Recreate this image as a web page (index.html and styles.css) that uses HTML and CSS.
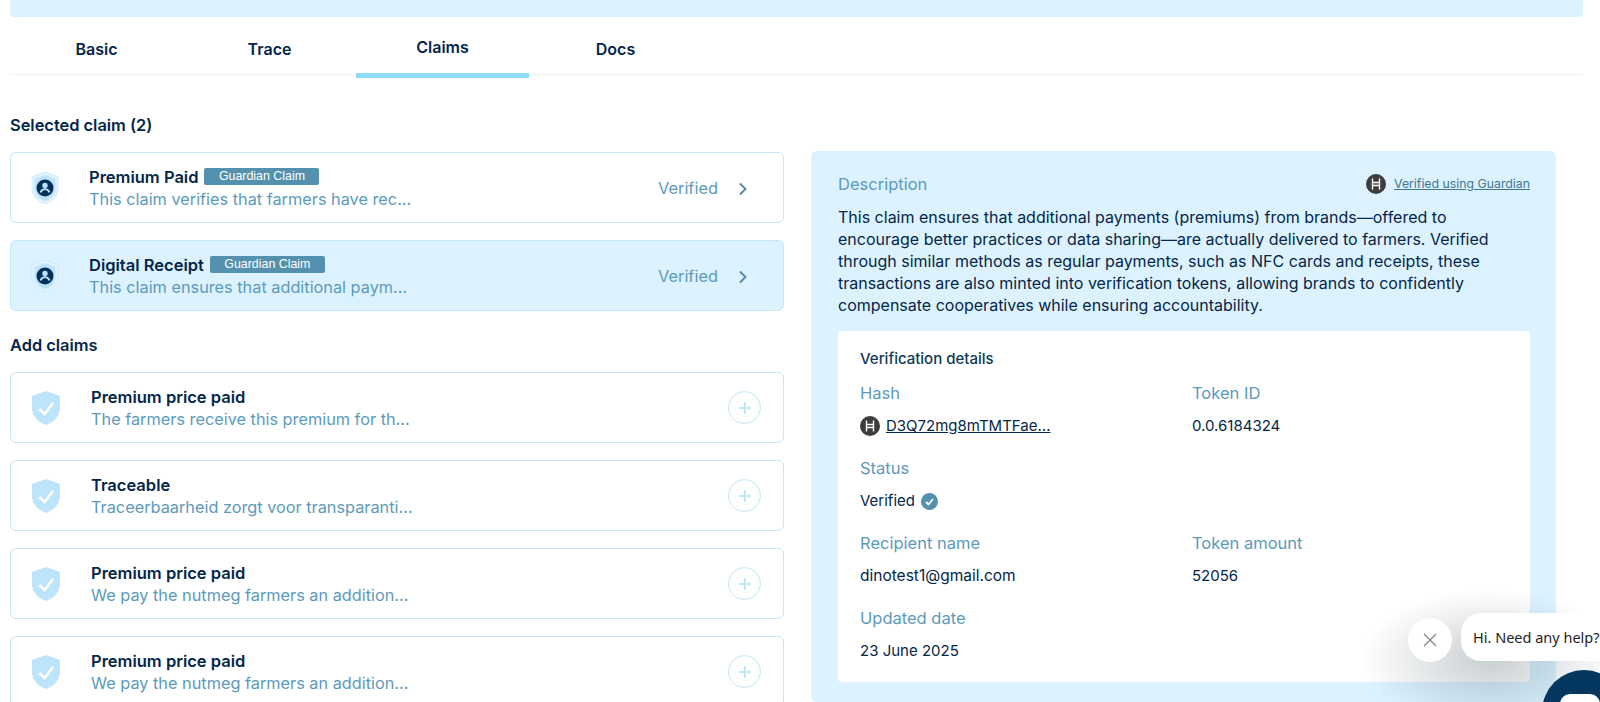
FILE: index.html
```html
<!DOCTYPE html>
<html>
<head>
    <meta charset="utf-8"/>
    <title>Claims</title>
    <meta name="viewport" content="width=device-width, initial-scale=1"/>
    <link rel="stylesheet" href="styles.css">
</head>
<body>
    <svg class="defs" width="0" height="0">
        <symbol id="shield-user" viewBox="0 0 28 34">
            <path d="M14 1 27 6v11c0 8-5.500 13-13 16C6.500 30 1 25 1 17V6z" fill="#e3f4fe" stroke="#cdeafc"/>
            <path d="M14 4 24.500 8v9.500c0 6.500-4.500 10.500-10.500 13-6-2.500-10.500-6.500-10.500-13V8z" fill="#bde4fb"/>
            <circle cx="14" cy="17" r="8.500" fill="#04305a"/>
            <circle cx="14" cy="14.500" r="2.700" fill="#bde4fb"/>
            <path d="M9.500 21.500c.8-2.300 2.500-3.300 4.500-3.300s3.700 1 4.500 3.300" fill="none" stroke="#bde4fb" stroke-width="1.800"/>
        </symbol>
        <symbol id="shield-check" viewBox="0 0 28 34">
            <path d="M14 0 28 5v12c0 8-6 14-14 17C6 31 0 25 0 17V5z" fill="#bde4fb"/>
            <path d="M7.500 18l5 5 8.500-11" fill="none" stroke="#fff" stroke-width="2.600"/>
        </symbol>
        <symbol id="hedera" viewBox="0 0 20 20">
            <circle cx="10" cy="10" r="10" fill="#3d3d3d"/>
            <path d="M6.500 4.500v11M13.500 4.500v11M6.500 8.500h7M6.500 11.500h7" fill="none" stroke="#fff" stroke-width="1.400"/>
        </symbol>
        <symbol id="chevron" viewBox="0 0 10 14">
            <path d="M2 1.500 7.500 7 2 12.500" fill="none" stroke="#4f88a8" stroke-width="1.800"/>
        </symbol>
    </svg>

    <div class="topbar"></div>

    <nav class="tabs">
        <a class="tab">Basic</a>
        <a class="tab">Trace</a>
        <a class="tab active">Claims</a>
        <a class="tab">Docs</a>
    </nav>

    <main class="content">
        <section class="claims">
            <h2>Selected claim (2)</h2>
            <div class="card selected">
                <svg class="shield"><use href="#shield-user"/></svg>
                <div class="card-text">
                    <div class="card-title">Premium Paid <span class="badge">Guardian Claim</span></div>
                    <div class="card-sub">This claim verifies that farmers have rec...</div>
                </div>
                <span class="state">Verified</span>
                <svg class="chevron"><use href="#chevron"/></svg>
            </div>
            <div class="card selected current">
                <svg class="shield"><use href="#shield-user"/></svg>
                <div class="card-text">
                    <div class="card-title">Digital Receipt <span class="badge">Guardian Claim</span></div>
                    <div class="card-sub">This claim ensures that additional paym...</div>
                </div>
                <span class="state">Verified</span>
                <svg class="chevron"><use href="#chevron"/></svg>
            </div>

            <h2 class="add-head">Add claims</h2>
            <div class="card addable">
                <svg class="shield"><use href="#shield-check"/></svg>
                <div class="card-text">
                    <div class="card-title">Premium price paid</div>
                    <div class="card-sub">The farmers receive this premium for th...</div>
                </div>
                <span class="plus"></span>
            </div>
            <div class="card addable">
                <svg class="shield"><use href="#shield-check"/></svg>
                <div class="card-text">
                    <div class="card-title">Traceable</div>
                    <div class="card-sub">Traceerbaarheid zorgt voor transparanti...</div>
                </div>
                <span class="plus"></span>
            </div>
            <div class="card addable">
                <svg class="shield"><use href="#shield-check"/></svg>
                <div class="card-text">
                    <div class="card-title">Premium price paid</div>
                    <div class="card-sub">We pay the nutmeg farmers an addition...</div>
                </div>
                <span class="plus"></span>
            </div>
            <div class="card addable">
                <svg class="shield"><use href="#shield-check"/></svg>
                <div class="card-text">
                    <div class="card-title">Premium price paid</div>
                    <div class="card-sub">We pay the nutmeg farmers an addition...</div>
                </div>
                <span class="plus"></span>
            </div>
        </section>

        <section class="panel">
            <div class="panel-head">
                <span class="label">Description</span>
                <span class="using">
                    <svg class="hedera"><use href="#hedera"/></svg>
                    <a>Verified using Guardian</a>
                </span>
            </div>
            <p class="desc">This claim ensures that additional payments (premiums) from brands—offered to encourage better practices or data sharing—are actually delivered to farmers. Verified through similar methods as regular payments, such as NFC cards and receipts, these transactions are also minted into verification tokens, allowing brands to confidently compensate cooperatives while ensuring accountability.</p>
            <div class="details">
                <h3>Verification details</h3>
                <div class="details-grid">
                    <div class="field">
                        <span class="label">Hash</span>
                        <span class="value hash"><svg class="hedera"><use href="#hedera"/></svg><a>D3Q72mg8mTMTFae...</a></span>
                    </div>
                    <div class="field">
                        <span class="label">Token ID</span>
                        <span class="value">0.0.6184324</span>
                    </div>
                    <div class="field wide">
                        <span class="label">Status</span>
                        <span class="value status">Verified
                            <svg class="check" viewBox="0 0 17 17">
                                <circle cx="8.500" cy="8.500" r="8.500" fill="#5391ae"/>
                                <path d="M5 9l2.500 2.500L12 6" fill="none" stroke="#fff" stroke-width="1.800"/>
                            </svg>
                        </span>
                    </div>
                    <div class="field">
                        <span class="label">Recipient name</span>
                        <span class="value email">dinotest1@gmail.com</span>
                    </div>
                    <div class="field">
                        <span class="label">Token amount</span>
                        <span class="value">52056</span>
                    </div>
                    <div class="field wide">
                        <span class="label">Updated date</span>
                        <span class="value">23 June 2025</span>
                    </div>
                </div>
            </div>
        </section>
    </main>

    <div class="chat">
        <div class="chat-glow"></div>
        <button class="chat-close">
            <svg width="16" height="16" viewBox="0 0 16 16">
                <path d="M2 2l12 12M14 2 2 14" fill="none" stroke="#7d8488" stroke-width="1.200"/>
            </svg>
        </button>
        <div class="chat-bubble">Hi. Need any help?</div>
        <div class="chat-button"><span></span></div>
    </div>
</body>
</html>
```

FILE: styles.css
```css
html, body {
    height: 702px;
    margin: 0;
    overflow: hidden;
}
body {
    position: relative;
    background: #fff;
    color: #04264a;
    font-family: "Inter", "Liberation Sans", sans-serif;
    font-size: 16px;
    line-height: 20px;
}
.defs {
    position: absolute;
}
.topbar {
    height: 17px;
    margin-left: 10px;
    width: 1573px;
    background: #dcf2ff;
    border-radius: 0 0 4px 4px;
}

/* tabs */
.tabs {
    display: flex;
    height: 57px;
    margin: 0 17px 0 10px;
    border-bottom: 1px solid #eeeff0;
}
.tab {
    display: flex;
    align-items: center;
    justify-content: center;
    box-sizing: border-box;
    width: 173px;
    height: 61px;
    padding-top: 3px;
    font-weight: 600;
    font-size: 16px;
}
.tab.active {
    border-bottom: 5px solid #8fdcf7;
}

/* layout */
.content {
    display: grid;
    grid-template-columns: 774px 745px;
    column-gap: 27px;
    height: 627px;
    padding-left: 10px;
    overflow: hidden;
}
h2 {
    margin: 40px 0 17px;
    font-size: 16.400px;
    font-weight: 600;
    line-height: 20px;
}
h2.add-head {
    margin-top: 24px;
}

/* claim cards */
.card {
    display: flex;
    align-items: center;
    box-sizing: border-box;
    height: 71px;
    margin-bottom: 17px;
    border: 1px solid #c3e7fb;
    border-radius: 6px;
}
.card.current {
    background: #dcf2ff;
}
.shield {
    flex: none;
    width: 28px;
    height: 34px;
    margin-left: 20px;
}
.card-text {
    flex: 1;
    margin-left: 30px;
    padding-top: 1px;
}
.addable .shield {
    margin-left: 21px;
}
.addable .card-text {
    margin-left: 31px;
}
.card-title {
    display: flex;
    align-items: center;
    gap: 6px;
    height: 22px;
    font-size: 16.500px;
    font-weight: 600;
}
.card-sub {
    height: 22px;
    line-height: 22px;
    color: #5c9abc;
    font-size: 16.300px;
}
.badge {
    box-sizing: border-box;
    width: 115px;
    height: 17px;
    margin-top: -2px;
    border-radius: 2px;
    background: #5391ae;
    color: #fff;
    font-family: "Liberation Sans", sans-serif;
    font-size: 12.400px;
    font-weight: 400;
    line-height: 17px;
    text-align: center;
}
.state {
    color: #5c9abc;
    font-size: 16.400px;
}
.chevron {
    width: 10px;
    height: 14px;
    margin: 2px 35px 0 20px;
}
.plus {
    position: relative;
    box-sizing: border-box;
    width: 33px;
    height: 33px;
    margin-right: 22px;
    border: 1.500px solid #bfe6fb;
    border-radius: 50%;
}
.plus::before, .plus::after {
    content: "";
    position: absolute;
    left: 50%;
    top: 50%;
    background: #bfe6fb;
}
.plus::before {
    width: 12px;
    height: 2px;
    margin: -1px 0 0 -6px;
}
.plus::after {
    width: 2px;
    height: 12px;
    margin: -6px 0 0 -1px;
}

/* right panel */
.panel {
    box-sizing: border-box;
    height: 551px;
    margin-top: 76px;
    padding: 23px 26px 20px 27px;
    border-radius: 6px;
    background: #dcf2ff;
}
.panel-head {
    display: flex;
    justify-content: space-between;
    align-items: center;
    margin-bottom: 12px;
}
.label {
    color: #5c9abc;
    font-size: 16.500px;
}
.using {
    display: flex;
    align-items: center;
    gap: 8px;
    font-size: 12.300px;
    color: #3f7796;
}
.using a, .hash a {
    text-decoration: underline;
}
.hedera {
    flex: none;
    width: 20px;
    height: 20px;
}
.desc {
    margin: 0 0 15px;
    line-height: 22px;
}
.details {
    height: 351px;
    box-sizing: border-box;
    padding: 18px 22px;
    border-radius: 4px;
    background: #fff;
}
h3 {
    margin: 0 0 14px;
    font-size: 15px;
    font-weight: 500;
    line-height: 20px;
    color: #0d3a58;
}
.details-grid {
    display: grid;
    grid-template-columns: 332px 1fr;
    row-gap: 22px;
}
.field {
    display: flex;
    flex-direction: column;
    gap: 13px;
}
.field.wide {
    grid-column: 1 / 3;
}
.value {
    display: flex;
    align-items: center;
    height: 20px;
    font-size: 15px;
}
.email {
    font-size: 15.500px;
}
.hash {
    gap: 6px;
}
.status {
    gap: 6px;
}
.check {
    width: 17px;
    height: 17px;
}

/* chat widget */
.chat {
    position: absolute;
    right: 0;
    bottom: 0;
    width: 260px;
    height: 122px;
    overflow: hidden;
}
.chat-glow {
    position: absolute;
    left: 20px;
    top: 10px;
    width: 260px;
    height: 140px;
    border-radius: 50%;
    background: radial-gradient(closest-side, rgba(60, 80, 90, .28), rgba(60, 80, 90, 0));
}
.chat-close {
    position: absolute;
    left: 68px;
    top: 38px;
    display: flex;
    align-items: center;
    justify-content: center;
    width: 44px;
    height: 44px;
    padding: 0;
    border: none;
    border-radius: 50%;
    background: #fff;
}
.chat-bubble {
    position: absolute;
    left: 121px;
    top: 33px;
    width: 160px;
    height: 48px;
    box-sizing: border-box;
    padding: 0 12px;
    border-radius: 20px;
    background: #fff;
    color: #1f2326;
    font-family: "Noto Sans", sans-serif;
    font-size: 14.500px;
    line-height: 48px;
}
.chat-button {
    position: absolute;
    left: 202px;
    top: 90px;
    width: 84px;
    height: 84px;
    border-radius: 50%;
    background: #03375f;
}
.chat-button span {
    position: absolute;
    left: 18px;
    top: 24px;
    width: 40px;
    height: 36px;
    border-radius: 10px;
    background: #fff;
}
```
